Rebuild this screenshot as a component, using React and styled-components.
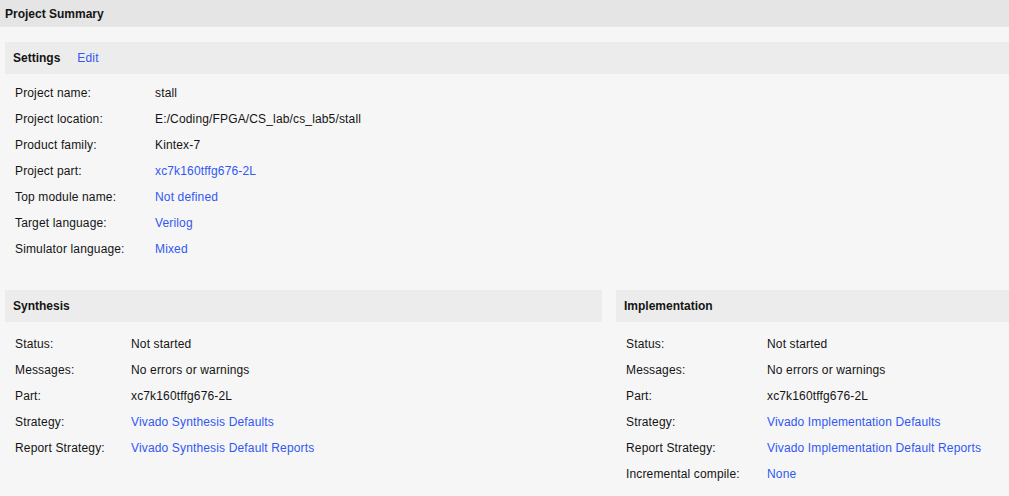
import { Fragment } from "react";
import styled, { createGlobalStyle } from "styled-components";

const GlobalStyle = createGlobalStyle`
  html, body {
    margin: 0;
    padding: 0;
    background: #f6f6f6;
    font-family: "Liberation Sans", Arial, sans-serif;
    font-size: 12px;
    letter-spacing: 0.15px;
    color: #141414;
  }
`;

const Page = styled.div`
  width: 1009px;
  height: 496px;
  overflow: hidden;
  background: #f6f6f6;
`;

const TopBar = styled.div`
  height: 27px;
  display: flex;
  align-items: center;
  padding: 0 5px;
  background: #e5e5e5;
  font-weight: bold;
  letter-spacing: 0;
  margin-bottom: 15px;
`;

const Columns = styled.div`
  display: grid;
  grid-template-columns: 597px 1fr;
  column-gap: 14px;
  padding-left: 5px;
  margin-top: 28px;
`;

const Section = styled.section`
  display: flex;
  flex-direction: column;
`;

const SectionHeader = styled.div`
  height: 32px;
  display: flex;
  align-items: center;
  gap: 17px;
  padding: 0 8px;
  background: #ececec;
  font-weight: bold;
  letter-spacing: 0;
`;

const HeaderLink = styled.span`
  font-weight: normal;
  color: #3158f4;
  letter-spacing: 0.15px;
`;

const Rows = styled.div`
  display: grid;
  grid-template-columns: ${({ $labelWidth }) => $labelWidth}px auto;
  grid-auto-rows: 26px;
  align-items: center;
  padding: ${({ $top }) => $top}px 10px 0;
  justify-content: start;
`;

const Label = styled.span`
  color: #141414;
`;

const Value = styled.span`
  color: ${({ $link }) => ($link ? "#3158f4" : "#141414")};
`;

const settings = [
  ["Project name:", "stall"],
  ["Project location:", "E:/Coding/FPGA/CS_lab/cs_lab5/stall"],
  ["Product family:", "Kintex-7"],
  ["Project part:", "xc7k160tffg676-2L", true],
  ["Top module name:", "Not defined", true],
  ["Target language:", "Verilog", true],
  ["Simulator language:", "Mixed", true],
];

const synthesis = [
  ["Status:", "Not started"],
  ["Messages:", "No errors or warnings"],
  ["Part:", "xc7k160tffg676-2L"],
  ["Strategy:", "Vivado Synthesis Defaults", true],
  ["Report Strategy:", "Vivado Synthesis Default Reports", true],
];

const implementation = [
  ["Status:", "Not started"],
  ["Messages:", "No errors or warnings"],
  ["Part:", "xc7k160tffg676-2L"],
  ["Strategy:", "Vivado Implementation Defaults", true],
  ["Report Strategy:", "Vivado Implementation Default Reports", true],
  ["Incremental compile:", "None", true],
];

const RowList = ({ items, labelWidth, top }) => (
  <Rows $labelWidth={labelWidth} $top={top}>
    {items.map(([label, value, link]) => (
      <Fragment key={label}>
        <Label>{label}</Label>
        <Value $link={link}>{value}</Value>
      </Fragment>
    ))}
  </Rows>
);

const SettingsWrap = styled.div`
  padding-left: 5px;
`;

export default function App() {
  return (
    <Page>
      <GlobalStyle />
      <TopBar>Project Summary</TopBar>
      <SettingsWrap>
        <Section>
          <SectionHeader>
            Settings <HeaderLink>Edit</HeaderLink>
          </SectionHeader>
          <RowList items={settings} labelWidth={140} top={6} />
        </Section>
      </SettingsWrap>
      <Columns>
        <Section>
          <SectionHeader>Synthesis</SectionHeader>
          <RowList items={synthesis} labelWidth={116} top={9} />
        </Section>
        <Section>
          <SectionHeader>Implementation</SectionHeader>
          <RowList items={implementation} labelWidth={141} top={9} />
        </Section>
      </Columns>
    </Page>
  );
}
